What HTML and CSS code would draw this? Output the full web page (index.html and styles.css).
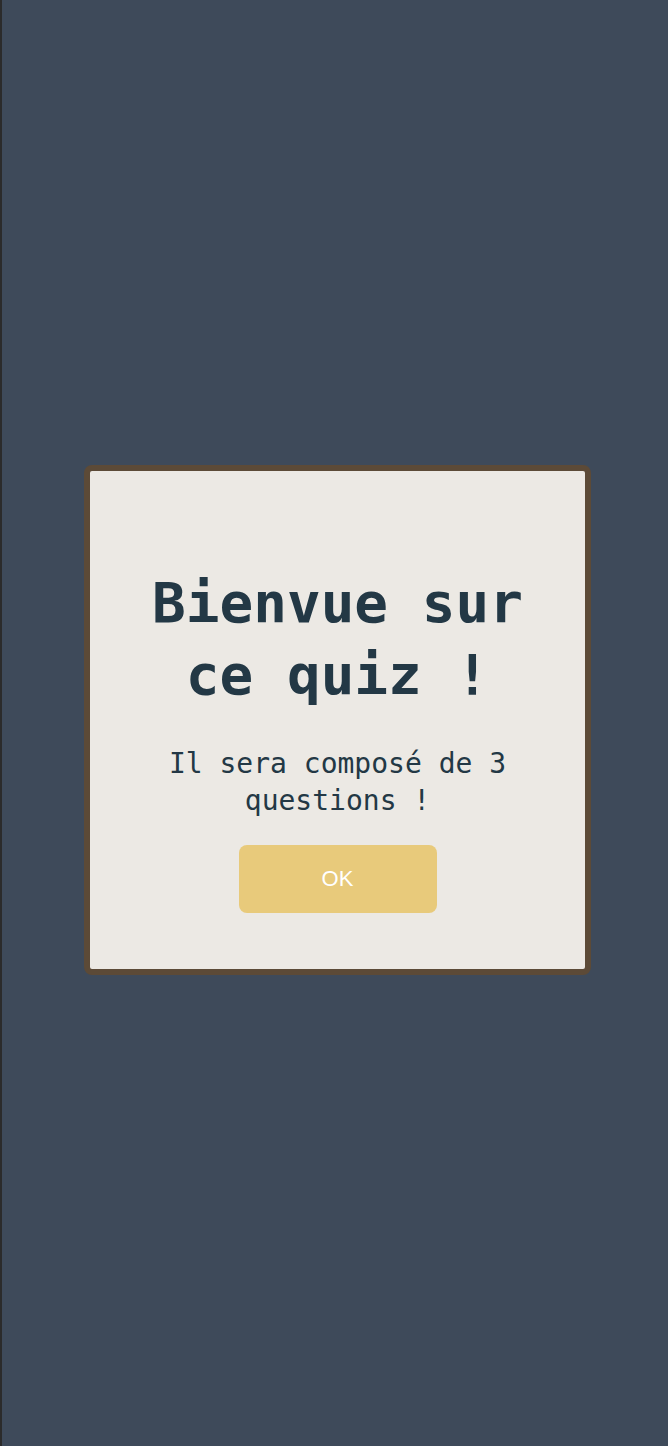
FILE: index.html
```html
<!DOCTYPE html>
<html lang="fr">
<head>
<meta charset="utf-8">
<title>Quiz</title>
<link rel="stylesheet" href="styles.css">
</head>
<body>
<div class="page">
  <div class="modal">
    <h1 class="title">Bienvue sur ce quiz !</h1>
    <p class="subtitle">Il sera composé de 3 questions !</p>
    <button class="ok">OK</button>
  </div>
</div>
</body>
</html>
```
FILE: styles.css
```css
html, body {
  margin: 0;
  padding: 0;
}
body {
  background: #3e4a5a;
  border-left: 2px solid #2b2b2b;
  min-height: 1446px;
  box-sizing: border-box;
}
.page {
  padding-top: 465px;
  padding-left: 82px;
}
.modal {
  width: 507px;
  height: 510px;
  box-sizing: border-box;
  background: #ece9e4;
  border: 6px solid #5c4a37;
  border-radius: 8px;
  padding: 96px 40px 0;
  display: flex;
  flex-direction: column;
  align-items: center;
  text-align: center;
  color: #233845;
  font-family: "DejaVu Sans Mono", "Liberation Mono", monospace;
}
.title {
  margin: 0;
  font-size: 56px;
  line-height: 72px;
  font-weight: bold;
}
.subtitle {
  margin: 34px 0 0;
  font-size: 28px;
  line-height: 37px;
  font-weight: normal;
}
.ok {
  margin-top: 26px;
  width: 198px;
  height: 68px;
  border: none;
  border-radius: 8px;
  background: #e8ca7b;
  color: #ffffff;
  font-family: "Liberation Sans", Arial, sans-serif;
  font-size: 22px;
}
```
